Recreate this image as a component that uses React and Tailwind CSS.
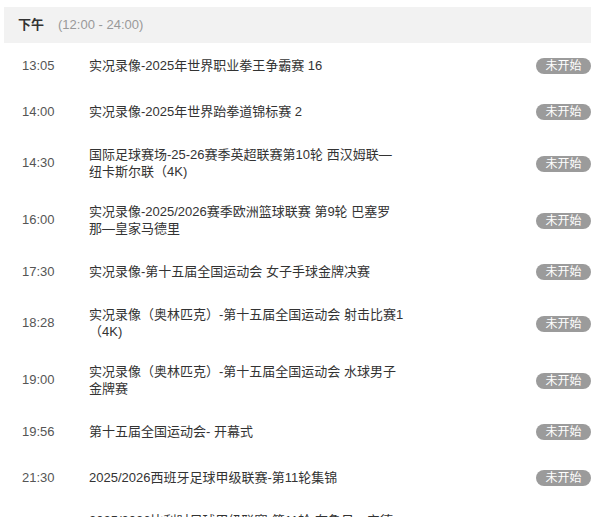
import React from "react";

const rows = [
  { t: "13:05", lines: ["实况录像-2025年世界职业拳王争霸赛 16"] },
  { t: "14:00", lines: ["实况录像-2025年世界跆拳道锦标赛 2"] },
  { t: "14:30", lines: ["国际足球赛场-25-26赛季英超联赛第10轮 西汉姆联—", "纽卡斯尔联（4K)"] },
  { t: "16:00", lines: ["实况录像-2025/2026赛季欧洲篮球联赛 第9轮 巴塞罗", "那—皇家马德里"] },
  { t: "17:30", lines: ["实况录像-第十五届全国运动会 女子手球金牌决赛"] },
  { t: "18:28", lines: ["实况录像（奥林匹克）-第十五届全国运动会 射击比赛1", "（4K)"] },
  { t: "19:00", lines: ["实况录像（奥林匹克）-第十五届全国运动会 水球男子", "金牌赛"] },
  { t: "19:56", lines: ["第十五届全国运动会- 开幕式"] },
  { t: "21:30", lines: ["2025/2026西班牙足球甲级联赛-第11轮集锦"] },
  { t: "23:00", lines: ["2025/2026比利时足球甲级联赛-第11轮 布鲁日—安德", "莱赫特"] },
];

export default function App() {
  return (
    <div
      className="w-[600px] h-[517px] overflow-hidden bg-white pt-[7px] pl-[4px] pr-[9px]"
      style={{ fontFamily: '"Liberation Sans", Arial, "Noto Sans CJK SC", sans-serif' }}
    >
      <div className="h-[36px] bg-[#f2f2f2] flex items-center pl-[14px] text-[13px]">
        <span className="font-bold text-[#333]">下午</span>
        <span className="ml-[14px] text-[#999]">(12:00 - 24:00)</span>
      </div>
      {rows.map((r) => (
        <div key={r.t} className="flex items-center min-h-[46px] py-[12px] pl-[18px] text-[13px] leading-[16.5px]">
          <div className="w-[67px] shrink-0 text-[#555]">{r.t}</div>
          <div className="flex-1 text-[#333]">
            {r.lines.map((l, i) => (
              <div key={i} className="whitespace-nowrap">{l}</div>
            ))}
          </div>
          <div className="w-[55px] h-[16px] rounded-full bg-[#9b9b9b] text-white text-[12px] leading-[16px] text-center shrink-0">
            未开始
          </div>
        </div>
      ))}
    </div>
  );
}
